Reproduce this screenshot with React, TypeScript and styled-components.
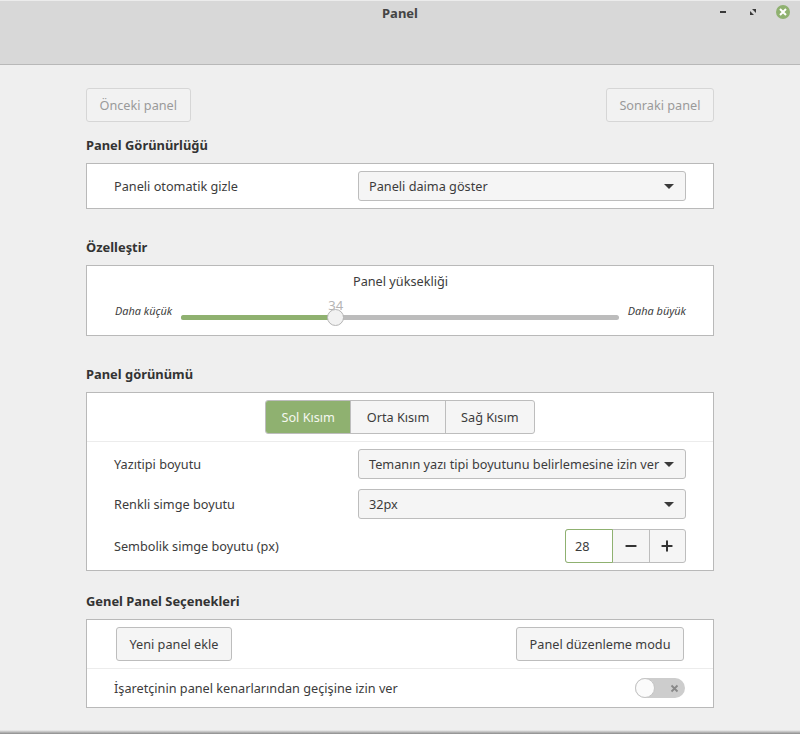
import React from 'react';
import styled, { createGlobalStyle } from 'styled-components';
import { Minus, Plus } from 'lucide-react';

const GlobalStyle = createGlobalStyle`
    html, body {
        margin: 0;
        padding: 0;
        background: #efefef;
    }
    body {
        font-family: "Noto Sans", "Open Sans", sans-serif;
        font-size: 12.7px;
        color: #3c3c3c;
    }
`;

const Select = ({ value }: { value: string }) => (
    <StSelect>
        <span>{value}</span>
        <StCaret />
    </StSelect>
);

const App = () => {
    return (
        <StWindow>
            <GlobalStyle />
            <StTitleBar>
                <StTitle>Panel</StTitle>
                <StWinControls>
                    <svg width="12" height="12" viewBox="0 0 12 12">
                        <rect x="4" y="5" width="6" height="2" fill="#3a3a3a" />
                    </svg>
                    <svg width="12" height="12" viewBox="0 0 12 12">
                        <path d="M6 3h4v4zM4 5l4 4H4z" fill="#3a3a3a" />
                    </svg>
                    <StClose>
                        <svg width="10" height="10" viewBox="0 0 10 10">
                            <path d="M2 2l6 6M8 2l-6 6" stroke="#fff" strokeWidth="2" />
                        </svg>
                    </StClose>
                </StWinControls>
            </StTitleBar>
            <StContent>
                <StNav>
                    <StNavButton>Önceki panel</StNavButton>
                    <StNavButton>Sonraki panel</StNavButton>
                </StNav>

                <StHeading $top={14}>Panel Görünürlüğü</StHeading>
                <StBox>
                    <StRow $height={44}>
                        <StLabel>Paneli otomatik gizle</StLabel>
                        <Select value="Paneli daima göster" />
                    </StRow>
                </StBox>

                <StHeading $top={29}>Özelleştir</StHeading>
                <StBox>
                    <StSliderWrap>
                        <StSliderTitle>Panel yüksekliği</StSliderTitle>
                        <StSliderRow>
                            <StHint>Daha küçük</StHint>
                            <StTrack>
                                <StFill style={{ width: '35.2%' }} />
                                <StThumb style={{ left: '35.2%' }}>
                                    <StThumbValue>34</StThumbValue>
                                </StThumb>
                            </StTrack>
                            <StHint>Daha büyük</StHint>
                        </StSliderRow>
                    </StSliderWrap>
                </StBox>

                <StHeading $top={29}>Panel görünümü</StHeading>
                <StBox>
                    <StTabRow>
                        <StTabs>
                            <StTab $active>Sol Kısım</StTab>
                            <StTab>Orta Kısım</StTab>
                            <StTab>Sağ Kısım</StTab>
                        </StTabs>
                    </StTabRow>
                    <StRow $height={44}>
                        <StLabel>Yazıtipi boyutu</StLabel>
                        <Select value="Temanın yazı tipi boyutunu belirlemesine izin ver" />
                    </StRow>
                    <StRow $height={36}>
                        <StLabel>Renkli simge boyutu</StLabel>
                        <Select value="32px" />
                    </StRow>
                    <StRow $height={48}>
                        <StLabel>Sembolik simge boyutu (px)</StLabel>
                        <StSpin>
                            <StSpinInput>28</StSpinInput>
                            <StSpinButton><Minus size={16} strokeWidth={3} /></StSpinButton>
                            <StSpinButton><Plus size={16} strokeWidth={3} /></StSpinButton>
                        </StSpin>
                    </StRow>
                </StBox>

                <StHeading $top={21}>Genel Panel Seçenekleri</StHeading>
                <StBox>
                    <StButtonRow>
                        <StButton>Yeni panel ekle</StButton>
                        <StButton>Panel düzenleme modu</StButton>
                    </StButtonRow>
                    <StSwitchRow>
                        <StLabel>İşaretçinin panel kenarlarından geçişine izin ver</StLabel>
                        <StSwitch>
                            <StKnob />
                            <svg width="9" height="9" viewBox="0 0 9 9">
                                <path d="M1.5 1.5l6 6M7.5 1.5l-6 6" stroke="#888" strokeWidth="1.8" />
                            </svg>
                        </StSwitch>
                    </StSwitchRow>
                </StBox>
            </StContent>
            <StBottomEdge />
        </StWindow>
    );
};

const StWindow = styled.div`
    position: relative;
    height: 734px;
    overflow: hidden;
    box-sizing: border-box;
    background: #efefef;
`;

const StTitleBar = styled.div`
    position: relative;
    height: 65px;
    box-sizing: border-box;
    background: #d8d8d8;
    border-top: 1px solid #ececec;
    border-bottom: 1px solid #b8b8b8;
    text-align: center;
`;

const StTitle = styled.div`
    padding-top: 3px;
    font-size: 13px;
    font-weight: 700;
    line-height: 18px;
    color: #444;
`;

const StWinControls = styled.div`
    position: absolute;
    top: 4px;
    right: 10px;
    display: flex;
    align-items: center;
    gap: 18px;
`;

const StClose = styled.div`
    width: 14px;
    height: 14px;
    border-radius: 50%;
    background: #8fb170;
    display: flex;
    align-items: center;
    justify-content: center;
`;

const StContent = styled.div`
    padding: 23px 86px 0;
`;

const StNav = styled.div`
    display: flex;
    justify-content: space-between;
`;

const StNavButton = styled.div`
    height: 34px;
    box-sizing: border-box;
    padding: 0 12.5px;
    display: flex;
    align-items: center;
    background: #f2f2f2;
    border: 1px solid #d6d6d6;
    border-radius: 3px;
    color: #9a9a9a;
`;

const StHeading = styled.div<{ $top: number }>`
    margin-top: ${props => props.$top}px;
    margin-bottom: 9px;
    height: 18px;
    line-height: 18px;
    font-size: 12.9px;
    font-weight: 700;
    color: #333;
`;

const StBox = styled.div`
    background: #fff;
    border: 1px solid #b9b9b9;
`;

const StRow = styled.div<{ $height: number }>`
    height: ${props => props.$height}px;
    display: flex;
    align-items: center;
    justify-content: space-between;
    padding: 0 27px;
`;

const StLabel = styled.div`
    color: #3c3c3c;
`;

const StSelect = styled.div`
    width: 328px;
    height: 30px;
    box-sizing: border-box;
    padding: 0 11px 0 10px;
    display: flex;
    align-items: center;
    justify-content: space-between;
    background: #f5f5f5;
    border: 1px solid #bdbdbd;
    border-radius: 3px;
    white-space: nowrap;
`;

const StCaret = styled.div`
    width: 0;
    height: 0;
    flex-shrink: 0;
    border-left: 5px solid transparent;
    border-right: 5px solid transparent;
    border-top: 5px solid #3a3a3a;
`;

const StSliderWrap = styled.div`
    height: 69px;
    box-sizing: border-box;
    padding: 6px 27px 0 28px;
`;

const StSliderTitle = styled.div`
    text-align: center;
    line-height: 18px;
`;

const StSliderRow = styled.div`
    margin-top: 14px;
    display: flex;
    align-items: flex-start;
    gap: 9px;
`;

const StHint = styled.div`
    font-size: 10.9px;
    font-style: italic;
    line-height: 14px;
    white-space: nowrap;
    color: #3c3c3c;
`;

const StTrack = styled.div`
    position: relative;
    flex: 1;
    height: 5px;
    margin-top: 11px;
    border-radius: 3px;
    background: #bcbcbc;
`;

const StFill = styled.div`
    height: 5px;
    border-radius: 3px;
    background: #8fb170;
`;

const StThumb = styled.div`
    position: absolute;
    top: -6px;
    width: 17px;
    height: 17px;
    margin-left: -8px;
    box-sizing: border-box;
    border-radius: 50%;
    background: #f2f2f2;
    border: 1px solid #b5b5b5;
`;

const StThumbValue = styled.div`
    position: absolute;
    bottom: 13px;
    left: 0;
    width: 100%;
    text-align: center;
    font-size: 13px;
    font-weight: 400;
    line-height: 14px;
    color: #b4b4b4;
`;

const StTabRow = styled.div`
    height: 48px;
    display: flex;
    align-items: center;
    justify-content: center;
    border-bottom: 1px solid #ececec;
`;

const StTabs = styled.div`
    display: flex;
    height: 34px;
    box-sizing: border-box;
    border: 1px solid #bdbdbd;
    border-radius: 3px;
    overflow: hidden;
    background: #f5f5f5;
`;

const StTab = styled.div<{ $active?: boolean }>`
    padding: 0 15.4px;
    display: flex;
    align-items: center;
    background: ${props => (props.$active ? '#8fb170' : 'transparent')};
    color: ${props => (props.$active ? '#f4f7ef' : '#3c3c3c')};
    & + & {
        border-left: 1px solid #bdbdbd;
    }
`;

const StSpin = styled.div`
    display: flex;
    height: 34px;
    width: 121px;
    box-sizing: border-box;
    border: 1px solid #bdbdbd;
    border-radius: 3px;
    background: #f5f5f5;
`;

const StSpinInput = styled.div`
    width: 48px;
    margin: -1px 0 -1px -1px;
    padding-left: 9px;
    box-sizing: border-box;
    display: flex;
    align-items: center;
    background: #fff;
    border: 1px solid #8fb170;
    border-radius: 3px 0 0 3px;
`;

const StSpinButton = styled.div`
    flex: 1;
    display: flex;
    align-items: center;
    justify-content: center;
    color: #333;
    & + & {
        border-left: 1px solid #bdbdbd;
    }
`;

const StButtonRow = styled.div`
    height: 48px;
    padding: 0 29px;
    display: flex;
    align-items: center;
    justify-content: space-between;
    border-bottom: 1px solid #ececec;
`;

const StButton = styled.div`
    height: 34px;
    box-sizing: border-box;
    padding: 0 12.5px;
    display: flex;
    align-items: center;
    background: #f5f5f5;
    border: 1px solid #bdbdbd;
    border-radius: 3px;
    color: #3c3c3c;
`;

const StSwitchRow = styled.div`
    height: 38px;
    padding: 0 28px 0 27px;
    display: flex;
    align-items: center;
    justify-content: space-between;
`;

const StSwitch = styled.div`
    position: relative;
    width: 50px;
    height: 20px;
    box-sizing: border-box;
    padding-right: 6px;
    display: flex;
    align-items: center;
    justify-content: flex-end;
    border-radius: 10px;
    background: #cdcdcd;
`;

const StKnob = styled.div`
    position: absolute;
    left: 0;
    top: 0;
    width: 20px;
    height: 20px;
    box-sizing: border-box;
    border-radius: 50%;
    background: #fbfbfb;
    border: 1px solid #c4c4c4;
`;

const StBottomEdge = styled.div`
    position: absolute;
    left: 0;
    right: 0;
    bottom: 0;
    height: 4px;
    background: linear-gradient(#efefef, #8a8a8a);
`;

export default App;
